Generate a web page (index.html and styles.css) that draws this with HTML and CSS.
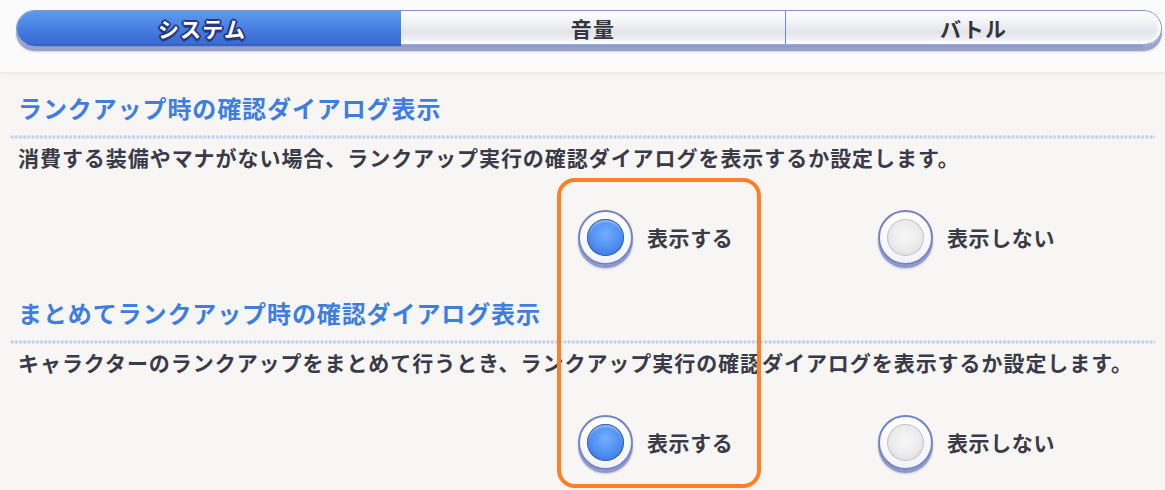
FILE: index.html
```html
<!DOCTYPE html>
<html lang="ja">
<head>
<meta charset="utf-8">
<title>設定</title>
<link rel="stylesheet" href="styles.css">
</head>
<body>
<div class="page">
  <header class="header">
    <nav class="tabs">
      <div class="tab active"><span>システム</span></div>
      <div class="tab"><span>音量</span></div>
      <div class="tab last"><span>バトル</span></div>
    </nav>
  </header>
  <main class="content">
    <section class="setting">
      <h2 class="title">ランクアップ時の確認ダイアログ表示</h2>
      <div class="dots"></div>
      <p class="desc">消費する装備やマナがない場合、ランクアップ実行の確認ダイアログを表示するか設定します。</p>
      <div class="options">
        <div class="option"><span class="radio on"><span class="dot"></span></span><span class="label">表示する</span></div>
        <div class="option"><span class="radio off"><span class="dot"></span></span><span class="label">表示しない</span></div>
      </div>
    </section>
    <section class="setting second">
      <h2 class="title">まとめてランクアップ時の確認ダイアログ表示</h2>
      <div class="dots"></div>
      <p class="desc">キャラクターのランクアップをまとめて行うとき、ランクアップ実行の確認ダイアログを表示するか設定します。</p>
      <div class="options">
        <div class="option"><span class="radio on"><span class="dot"></span></span><span class="label">表示する</span></div>
        <div class="option"><span class="radio off"><span class="dot"></span></span><span class="label">表示しない</span></div>
      </div>
    </section>
  </main>
  <div class="highlight"></div>
</div>
</body>
</html>
```
FILE: styles.css
```css
* { box-sizing: border-box; }
html, body {
  margin: 0;
  padding: 0;
  background: #f7f6f4;
  font-family: "Noto Sans CJK JP", "Noto Sans", sans-serif;
  font-weight: 700;
  color: #3a3b48;
}
.page {
  position: relative;
  width: 1165px;
  height: 490px;
  overflow: hidden;
}
.header {
  height: 72px;
  background: #fbfbfb;
  padding: 10px 3px 0 16px;
  box-shadow: 0 1px 0 #ececec, 0 2px 3px rgba(0, 0, 0, 0.05);
  position: relative;
}
.tabs {
  display: grid;
  grid-template-columns: 384px 384px 1fr;
  height: 37px;
  border-radius: 20px;
  border: 1px solid #8a91c2;
  box-shadow: 0 4px 0 #9ba2c9, 0 5px 2px rgba(80, 90, 140, 0.25);
  overflow: hidden;
}
.tab {
  display: flex;
  align-items: center;
  justify-content: center;
  font-size: 21px;
  letter-spacing: 1.2px;
  color: #34353f;
  background: linear-gradient(#ffffff 0%, #f1f2f5 35%, #e3e5ea 65%, #eef0f4 85%, #ffffff 100%);
  border-bottom: 2px solid #93a6dc;
}
.tab.last {
  border-left: 1px solid #6d8bd6;
  border-radius: 0 20px 20px 0;
  box-shadow: inset -3px 0 3px rgba(255, 255, 255, 0.9);
}
.tab.active {
  padding-right: 14px;
  color: #ffffff;
  background: linear-gradient(#5b9bec 0%, #4b85e4 45%, #3f73d9 75%, #3a6cd3 100%);
  border-bottom: 2px solid #3563c4;
  text-shadow:
    2px 0 0 #26357e, -2px 0 0 #26357e, 0 2px 0 #26357e, 0 -2px 0 #26357e,
    1.4px 1.4px 0 #26357e, -1.4px -1.4px 0 #26357e, 1.4px -1.4px 0 #26357e, -1.4px 1.4px 0 #26357e,
    0 3px 1px #26357e;
}
.content {
  padding: 0 10px;
}
.setting {
  padding-top: 20px;
}
.setting.second {
  padding-top: 32px;
}
.title {
  margin: 0;
  padding-left: 8px;
  font-size: 24px;
  line-height: 32px;
  letter-spacing: 0.9px;
  color: #3f7ee1;
  font-weight: 700;
}
.dots {
  margin-top: 11px;
  height: 4px;
  background-image: radial-gradient(circle, #c3d3ee 1.5px, transparent 1.9px);
  background-size: 4.2px 4px;
  background-repeat: repeat-x;
}
.desc {
  margin: 3px 0 0;
  padding-left: 8px;
  font-size: 21px;
  line-height: 30px;
  letter-spacing: 0.95px;
  color: #3a3b48;
}
.options {
  display: grid;
  grid-template-columns: 300px 300px;
  margin: 37px 0 0 568px;
}
.option {
  display: flex;
  align-items: center;
  gap: 14px;
  height: 56px;
}
.radio {
  width: 55px;
  height: 55px;
  border-radius: 50%;
  border: 2px solid #7683c3;
  background: linear-gradient(#ffffff, #f2f3f8);
  box-shadow: 0 3px 0 #8e98cb, 0 4px 2px rgba(60, 70, 120, 0.25);
  display: flex;
  align-items: center;
  justify-content: center;
  flex: none;
}
.dot {
  width: 37px;
  height: 37px;
  border-radius: 50%;
}
.radio.on .dot {
  background: radial-gradient(circle at 50% 40%, #72aefc 0%, #5593f4 45%, #3b75e2 85%, #3266cf 100%);
  box-shadow: inset 0 0 0 1px #3a5db4, inset 0 3px 2px rgba(255, 255, 255, 0.35);
}
.radio.off .dot {
  background: radial-gradient(circle at 50% 45%, #f7f7f7 0%, #ececec 50%, #dadada 85%, #cecece 100%);
  box-shadow: inset 0 0 0 1px #c7c7cc;
}
.label {
  font-size: 21px;
  letter-spacing: 0.6px;
  color: #3a3b48;
}
.highlight {
  position: absolute;
  left: 557px;
  top: 178px;
  width: 204px;
  height: 310px;
  border: 4px solid #ff7f27;
  border-radius: 18px;
  pointer-events: none;
}
```
